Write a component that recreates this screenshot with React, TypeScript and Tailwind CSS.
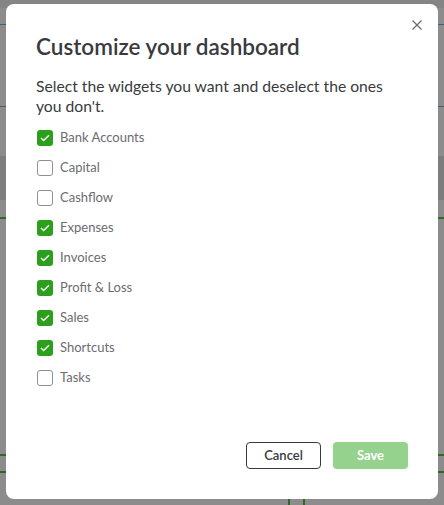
import React, { useState } from 'react';

const widgets = [
  { name: 'Bank Accounts', on: true },
  { name: 'Capital', on: false },
  { name: 'Cashflow', on: false },
  { name: 'Expenses', on: true },
  { name: 'Invoices', on: true },
  { name: 'Profit & Loss', on: true },
  { name: 'Sales', on: true },
  { name: 'Shortcuts', on: true },
  { name: 'Tasks', on: false },
];

const CheckRow: React.FC<{ name: string; checked: boolean; onToggle: () => void }> = ({ name, checked, onToggle }) => (
  <label className="flex h-[30px] cursor-pointer items-center" onClick={onToggle}>
    {checked ? (
      <span className="ml-[1px] flex h-[16px] w-[16px] items-center justify-center rounded-[3px] bg-[#2ca01c]">
        <svg width="10" height="8" viewBox="0 0 10 8" fill="none">
          <path d="M1 4l2.6 2.6L9 1.2" stroke="#fff" strokeWidth="1.4" />
        </svg>
      </span>
    ) : (
      <span className="ml-[1px] h-[16px] w-[16px] rounded-[3px] border border-[#8d9096] bg-white" />
    )}
    <span className="ml-[7px] text-[13px] text-[#6b6c72]">{name}</span>
  </label>
);

export default function App() {
  const [items, setItems] = useState(widgets);

  const toggle = (i: number) => {
    setItems(prev => prev.map((w, j) => (j === i ? { ...w, on: !w.on } : w)));
  };

  return (
    <div className="relative h-[505px] w-[444px] overflow-hidden bg-[#8c8c8c] pt-[4px] pl-[6px]" style={{ fontFamily: 'Lato, "Noto Sans", sans-serif' }}>
      {/* page underneath the overlay */}
      <div className="absolute left-0 top-0 h-[8px] w-full bg-[#858585]" />
      <div className="absolute left-0 top-[24px] h-[1px] w-full bg-[#3d5f7a]" />
      <div className="absolute left-0 top-[106px] h-[1px] w-full bg-[#3d5f7a]" />
      <div className="absolute left-0 top-[156px] h-[44px] w-full bg-[#7d7d7d]" />
      <div className="absolute left-0 top-[217px] h-[2px] w-full bg-[#2e6a24]" />
      <div className="absolute left-0 top-[454px] h-[2px] w-full bg-[#2e6a24]" />
      <div className="absolute left-0 top-[471px] h-[2px] w-full bg-[#2e6a24]" />
      <div className="absolute left-[288px] top-[496px] h-[9px] w-[2px] bg-[#2e6a24]" />
      <div className="absolute left-[303px] top-[496px] h-[9px] w-[2px] bg-[#2e6a24]" />

      <div className="relative flex h-[495px] w-[432px] flex-col rounded-[8px] bg-white pl-[30px] pr-[30px]">
        <button className="absolute right-[13px] top-[13px] flex p-[2px] text-[#6b6c72]">
          <svg width="12" height="12" viewBox="0 0 12 12" fill="none">
            <path d="M1.5 1.5l9 9M10.5 1.5l-9 9" stroke="currentColor" strokeWidth="1.3" />
          </svg>
        </button>

        <h1 className="mt-[29px] text-[22.5px] font-semibold leading-[28px] text-[#393a3d]">Customize your dashboard</h1>
        <p className="mt-[15px] w-[360px] text-[15.7px] leading-[20px] text-[#393a3d]">
          Select the widgets you want and deselect the ones you don't.
        </p>

        <div className="mt-[7px] flex flex-col">
          {items.map((w, i) => (
            <CheckRow key={w.name} name={w.name} checked={w.on} onToggle={() => toggle(i)} />
          ))}
        </div>

        <div className="mt-auto mb-[30px] flex justify-end gap-[12px]">
          <button className="h-[27px] w-[75px] rounded-[4px] border border-[#393a3d] bg-white text-[13px] font-semibold text-[#393a3d]">
            Cancel
          </button>
          <button className="h-[27px] w-[75px] rounded-[4px] bg-[#95d28d] text-[13px] font-bold text-white">
            Save
          </button>
        </div>
      </div>
    </div>
  );
}
